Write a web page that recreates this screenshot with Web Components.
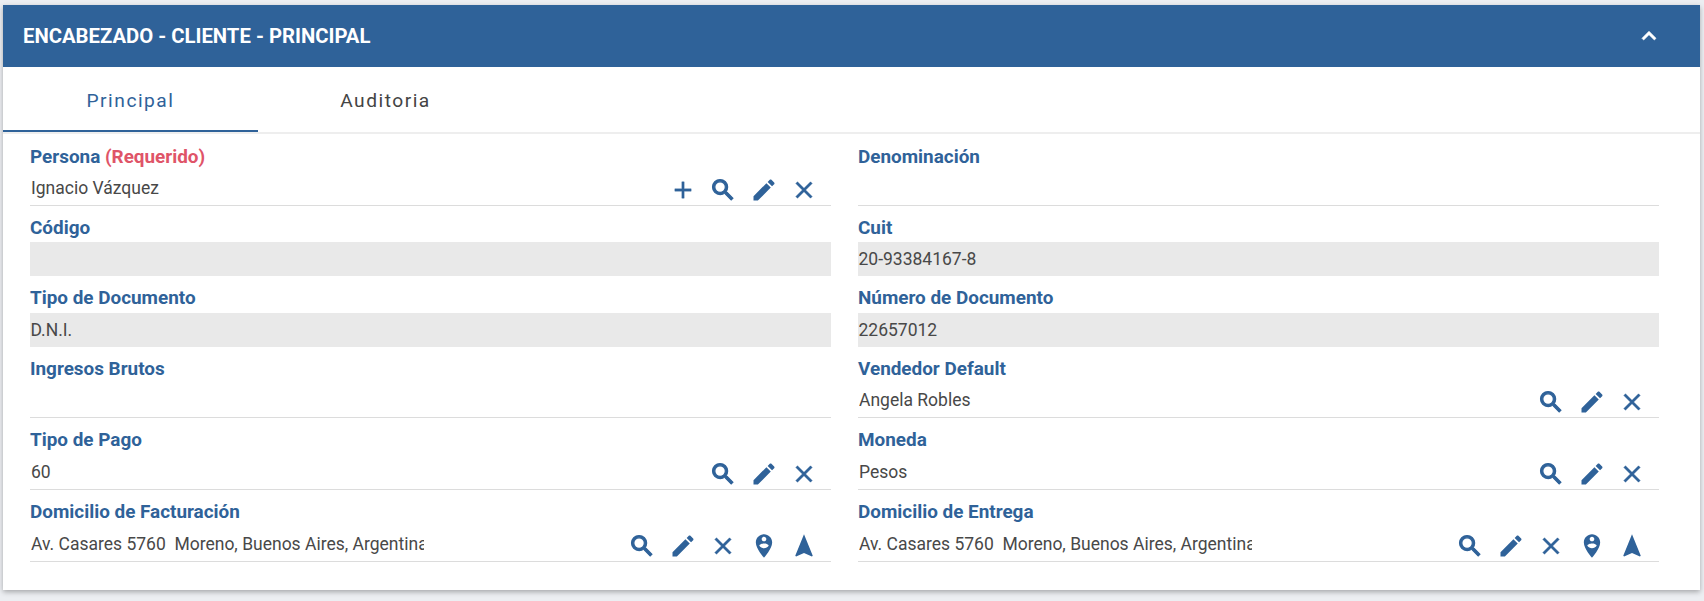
<!DOCTYPE html>
<html lang="es">
<head>
<meta charset="utf-8">
<title>Encabezado - Cliente</title>
<style>
  html, body { margin: 0; height: 601px; overflow: hidden; background: #eceef2; }
  body { padding: 5px 4px 11px 3px; box-sizing: border-box; font-family: Roboto, "Liberation Sans", sans-serif; }
</style>
</head>
<body>
<panel-card title-text="Encabezado - Cliente - Principal">
  <tab-strip>
    <tab-item active>Principal</tab-item>
    <tab-item>Auditoria</tab-item>
  </tab-strip>
  <form-grid>
    <form-field label="Persona" required>Ignacio Vázquez
      <field-icon slot="actions" name="add"></field-icon>
      <field-icon slot="actions" name="search"></field-icon>
      <field-icon slot="actions" name="edit"></field-icon>
      <field-icon slot="actions" name="close"></field-icon>
    </form-field>
    <form-field label="Denominación"></form-field>
    <form-field label="Código" readonly></form-field>
    <form-field label="Cuit" readonly>20-93384167-8</form-field>
    <form-field label="Tipo de Documento" readonly>D.N.I.</form-field>
    <form-field label="Número de Documento" readonly>22657012</form-field>
    <form-field label="Ingresos Brutos"></form-field>
    <form-field label="Vendedor Default">Angela Robles
      <field-icon slot="actions" name="search"></field-icon>
      <field-icon slot="actions" name="edit"></field-icon>
      <field-icon slot="actions" name="close"></field-icon>
    </form-field>
    <form-field label="Tipo de Pago">60
      <field-icon slot="actions" name="search"></field-icon>
      <field-icon slot="actions" name="edit"></field-icon>
      <field-icon slot="actions" name="close"></field-icon>
    </form-field>
    <form-field label="Moneda">Pesos
      <field-icon slot="actions" name="search"></field-icon>
      <field-icon slot="actions" name="edit"></field-icon>
      <field-icon slot="actions" name="close"></field-icon>
    </form-field>
    <form-field label="Domicilio de Facturación" clip>Av. Casares 5760&nbsp; Moreno, Buenos Aires, Argentina
      <field-icon slot="actions" name="search"></field-icon>
      <field-icon slot="actions" name="edit"></field-icon>
      <field-icon slot="actions" name="close"></field-icon>
      <field-icon slot="actions" name="pin"></field-icon>
      <field-icon slot="actions" name="navigation"></field-icon>
    </form-field>
    <form-field label="Domicilio de Entrega" clip>Av. Casares 5760&nbsp; Moreno, Buenos Aires, Argentina
      <field-icon slot="actions" name="search"></field-icon>
      <field-icon slot="actions" name="edit"></field-icon>
      <field-icon slot="actions" name="close"></field-icon>
      <field-icon slot="actions" name="pin"></field-icon>
      <field-icon slot="actions" name="navigation"></field-icon>
    </form-field>
  </form-grid>
</panel-card>

<script>
const ICONS = {
    add: 'M19 13h-6v6h-2v-6H5v-2h6V5h2v6h6v2z',
    search: 'M15.5 14h-.79l-.28-.27C15.41 12.59 16 11.11 16 9.5 16 5.91 13.09 3 9.5 3S3 5.91 3 9.5 5.91 16 9.5 16c1.61 0 3.09-.59 4.23-1.57l.27.28v.79l5 4.99L20.49 19l-4.99-5zm-6 0C7.01 14 5 11.99 5 9.5S7.01 5 9.5 5 14 7.01 14 9.5 11.99 14 9.5 14z',
    edit: 'M3 17.25V21h3.75L17.81 9.94l-3.75-3.75L3 17.25zM20.71 7.04c.39-.39.39-1.02 0-1.41l-2.34-2.34c-.39-.39-1.02-.39-1.41 0l-1.83 1.83 3.75 3.75 1.83-1.83z',
    close: 'M19 6.41L17.59 5 12 10.59 6.41 5 5 6.41 10.59 12 5 17.59 6.41 19 12 13.41 17.59 19 19 17.59 13.41 12z',
    pin: 'M12 2C8.14 2 5 5.14 5 9c0 5.25 7 13 7 13s7-7.75 7-13c0-3.86-3.14-7-7-7zm0 2c1.1 0 2 .9 2 2 0 1.11-.9 2-2 2s-2-.89-2-2c0-1.1.9-2 2-2zm0 10c-1.67 0-3.14-.85-4-2.15.02-1.32 2.67-2.05 4-2.05s3.98.73 4 2.05c-.86 1.3-2.33 2.15-4 2.15z',
    navigation: 'M12 2L4.5 20.29l.71.71L12 18l6.79 3 .71-.71z',
    expand: 'M12 8l-6 6 1.41 1.41L12 10.83l4.59 4.58L18 14z'
};
// these glyphs are heavier in the app than the plain material paths
const WEIGHT = { search: 1, close: 0.4, add: 0.3, expand: 0.6 };

class FieldIcon extends HTMLElement {
    connectedCallback() {
        const root = this.shadowRoot || this.attachShadow({ mode: 'open' });
        const name = this.getAttribute('name');
        const extra = WEIGHT[name] ? `stroke="currentColor" stroke-width="${WEIGHT[name]}"` : '';
        root.innerHTML = `
            <style>
                :host { display: flex; width: 40.5px; height: 28px; justify-content: center; align-items: center; color: var(--icon-color, #2f6299); }
                svg { width: 28px; height: 28px; fill: currentColor; display: block; }
            </style>
            <svg viewBox="0 0 24 24"><path d="${ICONS[name]}" ${extra}></path></svg>
        `;
    }
}
customElements.define('field-icon', FieldIcon);

class PanelCard extends HTMLElement {
    connectedCallback() {
        const root = this.attachShadow({ mode: 'open' });
        root.innerHTML = `
            <style>
                :host { display: block; height: 585px; background: #fff; box-shadow: 0 2px 5px rgba(0,0,0,.3); }
                header {
                    display: flex; justify-content: space-between; align-items: center;
                    height: 62px; padding: 0 37px 0 20px; background: #2f6299; color: #fff;
                    font: 700 20.3px Roboto, sans-serif; text-transform: uppercase;
                }
                header field-icon { --icon-color: #fff; width: 28px; }
            </style>
            <header><span>${this.getAttribute('title-text')}</span><field-icon name="expand"></field-icon></header>
            <slot></slot>
        `;
    }
}
customElements.define('panel-card', PanelCard);

class TabStrip extends HTMLElement {
    constructor() {
        super();
        this.attachShadow({ mode: 'open' }).innerHTML = `
            <style>
                :host { display: flex; height: 67px; box-sizing: border-box; border-bottom: 2px solid #eeeeee; }
            </style>
            <slot></slot>
        `;
    }
}
customElements.define('tab-strip', TabStrip);

class TabItem extends HTMLElement {
    constructor() {
        super();
        this.attachShadow({ mode: 'open' }).innerHTML = `
            <style>
                :host {
                    display: flex; width: 255px; height: 65px; box-sizing: border-box;
                    padding-top: 1px; justify-content: center; align-items: center;
                    font: 400 19.2px Roboto, sans-serif; letter-spacing: 1.5px; color: #444;
                }
                :host([active]) { color: #2f6299; border-bottom: 2px solid #2f6299; padding-top: 3px; }
            </style>
            <slot></slot>
        `;
    }
}
customElements.define('tab-item', TabItem);

class FormGrid extends HTMLElement {
    constructor() {
        super();
        this.attachShadow({ mode: 'open' }).innerHTML = `
            <style>
                :host {
                    display: grid; grid-template-columns: 801px 801px; column-gap: 27px;
                    grid-template-rows: 71px 70px 71px 71px 72px 72px;
                    padding: 1px 0 0 27px;
                }
            </style>
            <slot></slot>
        `;
    }
}
customElements.define('form-grid', FormGrid);

class FormField extends HTMLElement {
    connectedCallback() {
        const root = this.attachShadow({ mode: 'open' });
        const req = this.hasAttribute('required') ? ' <span class="req">(Requerido)</span>' : '';
        root.innerHTML = `
            <style>
                :host { display: flex; flex-direction: column; font-family: Roboto, sans-serif; }
                label { display: block; flex: 1; padding-top: 8px; box-sizing: border-box; line-height: 27px; font-size: 18.9px; font-weight: 700; color: #2f6299; }
                .req { color: #df5468; }
                .box {
                    display: flex; align-items: center; height: 36px; box-sizing: border-box;
                    border-bottom: 1px solid #dcdcdc; padding: 0 6.5px 0 1px;
                    font-size: 17.5px; color: #484848;
                }
                :host([readonly]) .box { height: 34px; background: #e9e9e9; border-bottom: 0; padding-left: .5px; }
                .value { flex: 1; min-width: 0; white-space: nowrap; overflow: hidden; }
                :host([clip]) .value { flex: 0 0 393px; margin-right: auto; }
                .actions { display: flex; margin-left: auto; padding-top: 4px; }
            </style>
            <label>${this.getAttribute('label')}${req}</label>
            <div class="box"><div class="value"><slot></slot></div><div class="actions"><slot name="actions"></slot></div></div>
        `;
    }
}
customElements.define('form-field', FormField);
</script>
</body>
</html>
